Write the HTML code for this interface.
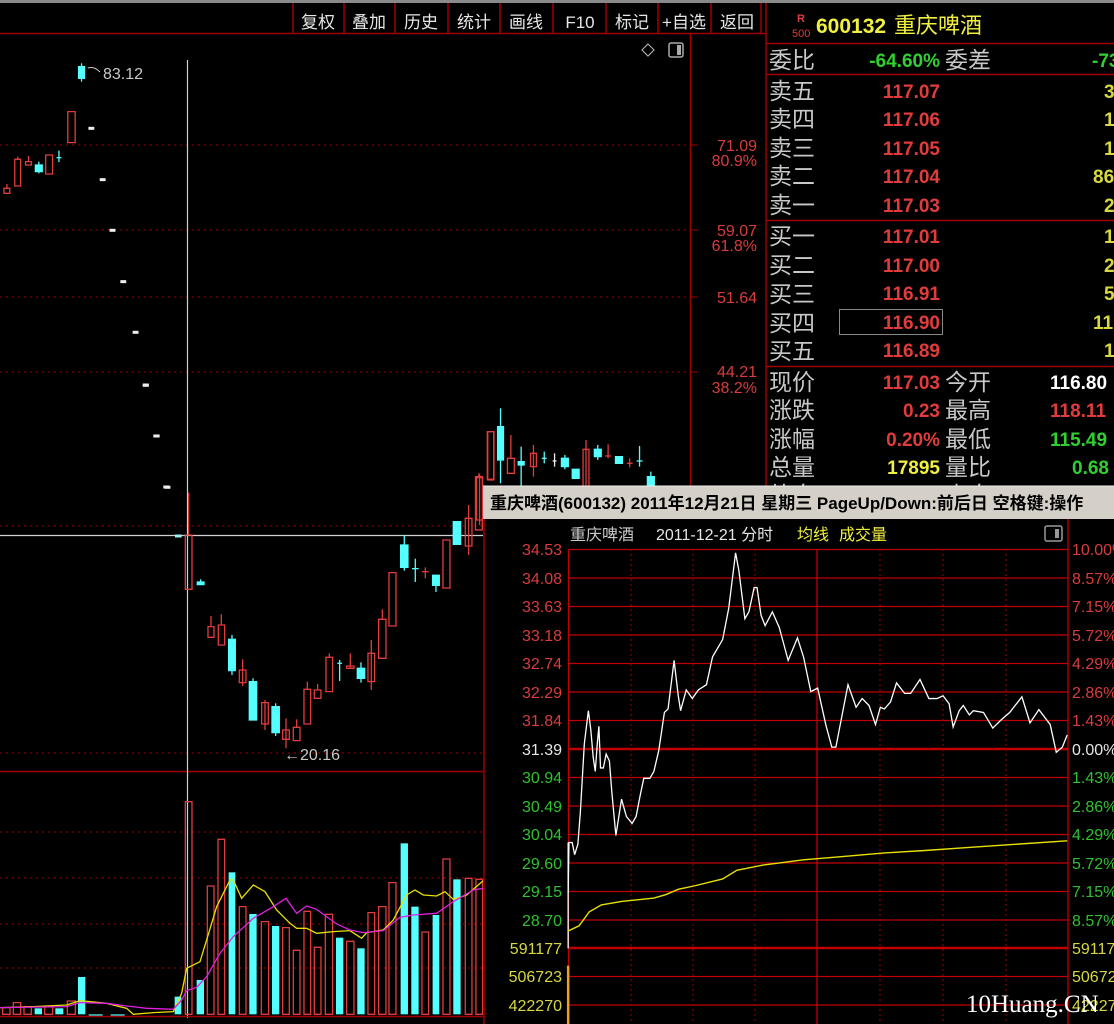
<!DOCTYPE html>
<html><head><meta charset="utf-8"><style>
html,body{margin:0;padding:0;background:#000;width:1114px;height:1024px;overflow:hidden}
svg{display:block}
text{font-family:"Liberation Sans","Noto Sans CJK SC",sans-serif}
.cn{font-family:"Liberation Sans","Noto Sans CJK SC",sans-serif}
.ns *{vector-effect:non-scaling-stroke}
</style></head><body>
<svg width="1114" height="1024" viewBox="0 0 1114 1024" xmlns="http://www.w3.org/2000/svg">
<rect width="1114" height="1024" fill="#000"/>
<rect x="0" y="0" width="1114" height="3" fill="#8a8a8a"/>
<g stroke="#a00000" stroke-width="1.5">
<line x1="0" y1="33.5" x2="766" y2="33.5"/>
<line x1="293" y1="3" x2="293" y2="33"/><line x1="344" y1="3" x2="344" y2="33"/><line x1="395" y1="3" x2="395" y2="33"/><line x1="448" y1="3" x2="448" y2="33"/><line x1="500" y1="3" x2="500" y2="33"/><line x1="553" y1="3" x2="553" y2="33"/><line x1="606" y1="3" x2="606" y2="33"/><line x1="658" y1="3" x2="658" y2="33"/><line x1="711" y1="3" x2="711" y2="33"/><line x1="761" y1="3" x2="761" y2="33"/>
<line x1="766" y1="3" x2="766" y2="487"/>
<line x1="690.5" y1="33" x2="690.5" y2="1024"/>
<line x1="0" y1="771.5" x2="690" y2="771.5"/>
</g>
<g fill="#e6e6e6" font-size="17" text-anchor="middle" class="cn">
<text x="318" y="28">复权</text><text x="369" y="28">叠加</text><text x="421" y="28">历史</text><text x="474" y="28">统计</text><text x="526" y="28">画线</text><text x="580" y="28">F10</text><text x="632" y="28">标记</text><text x="684" y="28">+自选</text><text x="737" y="28">返回</text>
</g>
<path d="M648 44 L654 50 L648 56 L642 50 Z" fill="none" stroke="#aaa" stroke-width="1.2"/>
<rect x="669" y="43" width="14" height="14" rx="2" fill="none" stroke="#aaa" stroke-width="1.5"/><rect x="677" y="45" width="4" height="10" fill="#aaa"/>
<g stroke="#a00000" stroke-width="1" stroke-dasharray="2,4">
<line x1="0" y1="145" x2="690" y2="145"/><line x1="0" y1="230" x2="690" y2="230"/><line x1="0" y1="297" x2="690" y2="297"/><line x1="0" y1="372" x2="690" y2="372"/><line x1="0" y1="526" x2="690" y2="526"/><line x1="0" y1="753" x2="690" y2="753"/>
<line x1="0" y1="832" x2="690" y2="832"/><line x1="0" y1="878" x2="690" y2="878"/><line x1="0" y1="924" x2="690" y2="924"/><line x1="0" y1="968" x2="690" y2="968"/>
</g>
<g fill="#d83c3c" font-size="16" text-anchor="end">
<text x="757" y="151">71.09</text><text x="757" y="166">80.9%</text>
<text x="757" y="236">59.07</text><text x="757" y="251">61.8%</text>
<text x="757" y="303">51.64</text>
<text x="757" y="377">44.21</text><text x="757" y="393">38.2%</text>
</g>
<g stroke="#a00000"><line x1="690" y1="145" x2="698" y2="145"/><line x1="690" y1="230" x2="698" y2="230"/><line x1="690" y1="297" x2="698" y2="297"/><line x1="690" y1="372" x2="698" y2="372"/></g>
<text x="103" y="79" fill="#c8c8c8" font-size="16">83.12</text>
<text x="284" y="760" fill="#c8c8c8" font-size="16">←20.16</text>
<path d="M88 68 Q94 66 100 72" stroke="#c8c8c8" fill="none"/>
<line x1="187.5" y1="60" x2="187.5" y2="1018" stroke="#d0d0d0" stroke-width="1.2"/>
<line x1="0" y1="535.5" x2="484" y2="535.5" stroke="#d0d0d0" stroke-width="1.2"/>
<g class="ns" transform="translate(0,30) scale(0.4912,0.3333)" stroke-width="1.3">
<g stroke="#e03c3c" fill="none">
<line x1="14" y1="462" x2="14" y2="475"/><rect x="8" y="475" width="12" height="15"/>
<line x1="36" y1="380" x2="36" y2="388"/><rect x="30" y="388" width="12" height="80"/>
<line x1="58" y1="378" x2="58" y2="395"/><rect x="52" y="395" width="12" height="10"/>
<rect x="93" y="375" width="14" height="57"/>
<rect x="138" y="245" width="15" height="93"/>
<line x1="975" y1="1330" x2="975" y2="1340"/><rect x="968" y="1340" width="14" height="160"/>
<rect x="993" y="1205" width="12" height="145"/>
<line x1="1040" y1="1215" x2="1040" y2="1285"/><rect x="1033" y="1285" width="14" height="45"/>
<line x1="1086" y1="1245" x2="1086" y2="1340"/><rect x="1080" y="1270" width="12" height="40"/>
<line x1="1193" y1="1230" x2="1193" y2="1370"/><rect x="1187" y="1258" width="12" height="112"/>
<line x1="1238" y1="1243" x2="1238" y2="1285"/><line x1="1232" y1="1278" x2="1244" y2="1278"/>
<line x1="1282" y1="1285" x2="1282" y2="1312"/><line x1="1276" y1="1300" x2="1288" y2="1300"/>
</g>
<g stroke="#54ffff" fill="#54ffff">
<line x1="79" y1="395" x2="79" y2="430"/><rect x="72" y="405" width="14" height="20"/>
<line x1="120" y1="362" x2="120" y2="396"/><line x1="115" y1="383" x2="125" y2="383"/>
<line x1="166" y1="100" x2="166" y2="155"/><rect x="160" y="110" width="12" height="35"/>
<line x1="1019" y1="1135" x2="1019" y2="1360"/><rect x="1013" y="1190" width="12" height="100"/>
<line x1="1061" y1="1250" x2="1061" y2="1370"/><rect x="1055" y="1295" width="12" height="10"/>
<line x1="1108" y1="1265" x2="1108" y2="1300"/><line x1="1103" y1="1285" x2="1113" y2="1285"/>
<line x1="1150" y1="1275" x2="1150" y2="1318"/><rect x="1143" y="1285" width="14" height="25"/>
<rect x="1165" y="1318" width="14" height="27"/>
<line x1="1217" y1="1245" x2="1217" y2="1290"/><rect x="1210" y="1258" width="14" height="22"/>
<rect x="1253" y="1280" width="14" height="20"/>
<line x1="1302" y1="1248" x2="1302" y2="1310"/><line x1="1296" y1="1293" x2="1308" y2="1293"/>
<line x1="1325" y1="1325" x2="1325" y2="1368"/><rect x="1318" y="1340" width="14" height="28"/>
</g>
<g stroke="#eee"><line x1="1129" y1="1270" x2="1129" y2="1310"/><line x1="1125" y1="1293" x2="1133" y2="1293"/></g>
<g stroke="#eee" stroke-width="3">
<line x1="180" y1="295" x2="192" y2="295"/><line x1="203" y1="449" x2="215" y2="449"/><line x1="223" y1="601" x2="235" y2="601"/><line x1="245" y1="755" x2="257" y2="755"/><line x1="270" y1="907" x2="282" y2="907"/><line x1="291" y1="1066" x2="303" y2="1066"/><line x1="313" y1="1218" x2="325" y2="1218"/><line x1="335" y1="1372" x2="347" y2="1372"/>
</g>
</g>
<g class="ns" transform="translate(0,380) scale(0.3333)" stroke-width="1.3">
<g stroke="#e03c3c" fill="none">
<line x1="566" y1="338" x2="566" y2="465"/><rect x="556" y="465" width="20" height="163"/>
<line x1="633" y1="708" x2="633" y2="740"/><rect x="624" y="740" width="18" height="32"/>
<line x1="664" y1="703" x2="664" y2="735"/><rect x="655" y="735" width="19" height="60"/>
<line x1="728" y1="838" x2="728" y2="918"/><rect x="718" y="870" width="20" height="38"/>
<line x1="795" y1="960" x2="795" y2="1050"/><rect x="785" y="968" width="20" height="64"/>
<line x1="858" y1="1015" x2="858" y2="1105"/><rect x="848" y="1050" width="20" height="28"/>
<line x1="890" y1="1018" x2="890" y2="1042"/><rect x="880" y="1042" width="20" height="40"/>
<line x1="922" y1="905" x2="922" y2="928"/><rect x="912" y="928" width="20" height="104"/>
<line x1="953" y1="912" x2="953" y2="930"/><rect x="943" y="930" width="20" height="25"/>
<line x1="988" y1="820" x2="988" y2="832"/><rect x="978" y="832" width="20" height="103"/>
<line x1="1051" y1="820" x2="1051" y2="865"/><rect x="1040" y="858" width="22" height="7"/>
<line x1="1114" y1="780" x2="1114" y2="930"/><rect x="1104" y="820" width="20" height="85"/>
<line x1="1147" y1="688" x2="1147" y2="718"/><rect x="1136" y="718" width="22" height="117"/>
<rect x="1167" y="578" width="21" height="160"/>
<line x1="1276" y1="562" x2="1276" y2="595"/><line x1="1266" y1="575" x2="1286" y2="575"/>
<rect x="1329" y="480" width="21" height="144"/>
<line x1="1406" y1="375" x2="1406" y2="525"/><rect x="1396" y="415" width="20" height="83"/>
<line x1="1439" y1="283" x2="1439" y2="435"/><rect x="1430" y="293" width="18" height="127"/>
<rect x="1462" y="155" width="20" height="143"/>
</g>
<g stroke="#54ffff" fill="#54ffff">
<line x1="602" y1="598" x2="602" y2="606"/><rect x="592" y="606" width="20" height="8"/>
<line x1="696" y1="765" x2="696" y2="885"/><rect x="686" y="778" width="20" height="94"/>
<line x1="759" y1="895" x2="759" y2="905"/><rect x="748" y="905" width="22" height="115"/>
<line x1="827" y1="970" x2="827" y2="1068"/><rect x="816" y="980" width="22" height="78"/>
<line x1="1019" y1="840" x2="1019" y2="903"/><line x1="1012" y1="850" x2="1026" y2="850"/>
<line x1="1083" y1="847" x2="1083" y2="908"/><rect x="1072" y="865" width="22" height="30"/>
<line x1="1213" y1="466" x2="1213" y2="572"/><rect x="1202" y="495" width="22" height="67"/>
<line x1="1246" y1="536" x2="1246" y2="606"/><line x1="1236" y1="566" x2="1256" y2="566"/>
<line x1="1308" y1="586" x2="1308" y2="636"/><rect x="1298" y="586" width="20" height="30"/>
<rect x="1360" y="425" width="22" height="68"/>
</g>
<g stroke="#eee" stroke-width="3"><line x1="428" y1="15" x2="446" y2="15"/><line x1="460" y1="168" x2="478" y2="168"/><line x1="490" y1="321" x2="508" y2="321"/><line x1="525" y1="468" x2="545" y2="468" stroke="#9ee"/></g>
</g>
<g class="ns" transform="translate(0,780) scale(0.3333)" stroke-width="1.3">
<g stroke="#e03c3c" fill="none">
<rect x="8" y="683" width="22" height="20"/><rect x="40" y="668" width="22" height="35"/><rect x="72" y="680" width="22" height="23"/><rect x="134" y="680" width="24" height="23"/><rect x="202" y="663" width="24" height="40"/>
<rect x="556" y="65" width="20" height="638"/><rect x="622" y="318" width="20" height="385"/><rect x="654" y="178" width="20" height="525"/><rect x="718" y="380" width="20" height="323"/><rect x="784" y="425" width="22" height="278"/>
<rect x="848" y="443" width="20" height="260"/><rect x="880" y="511" width="20" height="192"/><rect x="912" y="394" width="20" height="309"/><rect x="943" y="502" width="20" height="201"/><rect x="976" y="403" width="22" height="300"/>
<rect x="1040" y="484" width="22" height="219"/><rect x="1104" y="398" width="20" height="305"/><rect x="1136" y="380" width="22" height="323"/><rect x="1167" y="308" width="21" height="395"/>
<rect x="1266" y="456" width="20" height="247"/><rect x="1329" y="237" width="21" height="466"/><rect x="1396" y="295" width="20" height="408"/><rect x="1428" y="298" width="20" height="405"/>
</g>
<g fill="#54ffff">
<rect x="104" y="685" width="22" height="18"/><rect x="166" y="685" width="24" height="18"/><rect x="234" y="591" width="22" height="112"/>
<rect x="524" y="650" width="20" height="53"/><rect x="590" y="600" width="22" height="103"/><rect x="686" y="277" width="20" height="426"/><rect x="748" y="402" width="22" height="301"/><rect x="816" y="438" width="22" height="265"/>
<rect x="1008" y="473" width="22" height="230"/><rect x="1072" y="505" width="22" height="198"/><rect x="1202" y="190" width="22" height="513"/><rect x="1234" y="380" width="22" height="323"/><rect x="1298" y="405" width="20" height="298"/><rect x="1360" y="298" width="22" height="405"/>
</g>
<line x1="266" y1="705" x2="380" y2="705" stroke="#54ffff" stroke-dasharray="14,8"/>
<polyline fill="none" stroke="#e8e000" stroke-width="1.3" points="0,683 100,680 200,675 240,662 320,670 380,685 400,703 460,698 520,695 545,640 560,565 600,545 620,480 650,380 690,300 700,300 725,355 760,315 795,335 830,390 870,430 890,445 920,445 950,460 1000,455 1050,452 1085,475 1100,458 1150,450 1180,420 1220,345 1245,330 1270,345 1310,348 1335,335 1360,358 1400,345 1450,302"/>
<polyline fill="none" stroke="#e020e0" stroke-width="1.3" points="0,683 200,680 240,668 320,670 380,678 440,685 520,688 545,660 560,632 590,622 620,590 660,520 700,470 760,415 820,380 858,355 890,400 920,378 950,388 1010,432 1050,450 1090,458 1150,452 1200,412 1240,405 1310,400 1360,365 1420,330 1450,325"/>
</g>
<line x1="0" y1="1016.5" x2="690" y2="1016.5" stroke="#a00000" stroke-width="1.5"/>
<g stroke="#a00000" stroke-width="1.5">
<line x1="766" y1="43.5" x2="1114" y2="43.5"/><line x1="766" y1="74.5" x2="1114" y2="74.5"/><line x1="766" y1="220.5" x2="1114" y2="220.5"/><line x1="766" y1="366.5" x2="1114" y2="366.5"/>
</g>
<text x="797" y="22" fill="#e03c3c" font-size="11" font-weight="bold">R</text>
<text x="792" y="37" fill="#e03c3c" font-size="11">500</text>
<text x="816" y="33" fill="#f0f040" font-size="21" font-weight="bold">600132</text>
<text x="894" y="33" fill="#f0f040" font-size="22" class="cn">重庆啤酒</text>
<g fill="#c8c8c8" font-size="23" class="cn">
<text x="769" y="68">委比</text><text x="945" y="68">委差</text>
<text x="769" y="99">卖五</text><text x="769" y="127">卖四</text><text x="769" y="156">卖三</text><text x="769" y="184">卖二</text><text x="769" y="213">卖一</text>
<text x="769" y="244">买一</text><text x="769" y="273">买二</text><text x="769" y="302">买三</text><text x="769" y="331">买四</text><text x="769" y="359">买五</text>
<text x="769" y="390">现价</text><text x="945" y="390">今开</text>
<text x="769" y="418">涨跌</text><text x="945" y="418">最高</text>
<text x="769" y="447">涨幅</text><text x="945" y="447">最低</text>
<text x="769" y="475">总量</text><text x="945" y="475">量比</text>
<text x="769" y="503">外盘</text><text x="945" y="503">内盘</text>
</g>
<rect x="839.5" y="309.5" width="103" height="25" fill="none" stroke="#888" stroke-width="1"/>
<g font-size="19" font-weight="bold" text-anchor="end">
<text x="940" y="67" fill="#30d030">-64.60%</text>
<g fill="#e03c3c"><text x="940" y="98">117.07</text><text x="940" y="126">117.06</text><text x="940" y="155">117.05</text><text x="940" y="183">117.04</text><text x="940" y="212">117.03</text>
<text x="940" y="243">117.01</text><text x="940" y="272">117.00</text><text x="940" y="300">116.91</text><text x="940" y="329">116.90</text><text x="940" y="357">116.89</text>
<text x="940" y="389">117.03</text><text x="940" y="417">0.23</text><text x="940" y="446">0.20%</text></g>
<text x="940" y="474" fill="#f0f040">17895</text>
</g>
<g font-size="19" font-weight="bold">
<text x="1092" y="67" fill="#30d030">-73</text>
<g fill="#d8d840"><text x="1104" y="98">3</text><text x="1104" y="126">1</text><text x="1104" y="155">1</text><text x="1093" y="183">86</text><text x="1104" y="212">2</text>
<text x="1104" y="243">1</text><text x="1104" y="272">2</text><text x="1104" y="300">5</text><text x="1093" y="329">11</text><text x="1104" y="357">1</text></g>
<text x="1050" y="389" fill="#fff">116.80</text><text x="1050" y="417" fill="#e03c3c">118.11</text><text x="1050" y="446" fill="#30d030">115.49</text><text x="1072" y="474" fill="#30d030">0.68</text>
</g>
<rect x="483" y="486" width="631" height="538" fill="#000"/>
<rect x="483" y="486" width="631" height="33" fill="#d4d0c8"/>
<line x1="483" y1="486" x2="1114" y2="486" stroke="#eee"/>
<text x="490" y="509" fill="#000" font-size="17" font-weight="bold" class="cn">重庆啤酒(600132) 2011年12月21日 星期三 PageUp/Down:前后日 空格键:操作</text>
<line x1="484" y1="519" x2="484" y2="1024" stroke="#a00000" stroke-width="1.5"/>
<text x="570" y="540" fill="#c8c8c8" font-size="16" class="cn">重庆啤酒</text>
<text x="656" y="540" fill="#e6e6e6" font-size="16" class="cn">2011-12-21 分时</text>
<text x="797" y="540" fill="#f0f040" font-size="16" class="cn">均线</text>
<text x="839" y="540" fill="#f0f040" font-size="16" class="cn">成交量</text>
<rect x="1045" y="526" width="17" height="15" rx="2" fill="none" stroke="#999" stroke-width="1.5"/><rect x="1055" y="529" width="4" height="9" fill="#999"/>
<g stroke="#c00000" stroke-width="1.3">
<line x1="568" y1="549.5" x2="1068" y2="549.5"/><line x1="568" y1="578" x2="1068" y2="578"/><line x1="568" y1="606.5" x2="1068" y2="606.5"/><line x1="568" y1="635" x2="1068" y2="635"/><line x1="568" y1="663.5" x2="1068" y2="663.5"/><line x1="568" y1="692" x2="1068" y2="692"/><line x1="568" y1="720.5" x2="1068" y2="720.5"/>
<line x1="568" y1="749" x2="1068" y2="749" stroke-width="2.5"/>
<line x1="568" y1="777.5" x2="1068" y2="777.5"/><line x1="568" y1="806" x2="1068" y2="806"/><line x1="568" y1="834.5" x2="1068" y2="834.5"/><line x1="568" y1="863" x2="1068" y2="863"/><line x1="568" y1="891.5" x2="1068" y2="891.5"/><line x1="568" y1="920" x2="1068" y2="920"/>
<line x1="568" y1="948" x2="1068" y2="948" stroke-width="2.5"/><line x1="568" y1="976.5" x2="1068" y2="976.5"/><line x1="568" y1="1005" x2="1068" y2="1005"/>
<line x1="568.5" y1="549" x2="568.5" y2="1024"/><line x1="817" y1="549" x2="817" y2="1024"/><line x1="1068" y1="519" x2="1068" y2="1024"/>
</g>
<g stroke="#a00000" stroke-dasharray="2,3"><line x1="631" y1="549" x2="631" y2="1024"/><line x1="693" y1="549" x2="693" y2="1024"/><line x1="755" y1="549" x2="755" y2="1024"/><line x1="880" y1="549" x2="880" y2="1024"/><line x1="943" y1="549" x2="943" y2="1024"/><line x1="1006" y1="549" x2="1006" y2="1024"/></g>
<g font-size="16" text-anchor="end">
<g fill="#d83c3c"><text x="562" y="555">34.53</text><text x="562" y="584">34.08</text><text x="562" y="612">33.63</text><text x="562" y="641">33.18</text><text x="562" y="669">32.74</text><text x="562" y="698">32.29</text><text x="562" y="726">31.84</text></g>
<text x="562" y="755" fill="#e6e6e6">31.39</text>
<g fill="#30c030"><text x="562" y="783">30.94</text><text x="562" y="812">30.49</text><text x="562" y="840">30.04</text><text x="562" y="869">29.60</text><text x="562" y="897">29.15</text><text x="562" y="926">28.70</text></g>
<g fill="#d8d840"><text x="562" y="954">591177</text><text x="562" y="982">506723</text><text x="562" y="1011">422270</text></g>
</g>
<g font-size="16">
<g fill="#d83c3c"><text x="1072" y="555">10.00%</text><text x="1072" y="584">8.57%</text><text x="1072" y="612">7.15%</text><text x="1072" y="641">5.72%</text><text x="1072" y="669">4.29%</text><text x="1072" y="698">2.86%</text><text x="1072" y="726">1.43%</text></g>
<text x="1072" y="755" fill="#e6e6e6">0.00%</text>
<g fill="#30c030"><text x="1072" y="783">1.43%</text><text x="1072" y="812">2.86%</text><text x="1072" y="840">4.29%</text><text x="1072" y="869">5.72%</text><text x="1072" y="897">7.15%</text><text x="1072" y="926">8.57%</text></g>
<g fill="#d8d840"><text x="1072" y="954">591177</text><text x="1072" y="982">506723</text><text x="1072" y="1011">422270</text></g>
</g>
<g class="ns" transform="translate(480,480) scale(0.4044,0.3469)">
<line x1="218" y1="1400" x2="218" y2="1568" stroke="#f0a020" stroke-width="2.5"/>
<line x1="218" y1="1045" x2="218" y2="1350" stroke="#fff" stroke-width="1.3"/>
<polyline fill="none" stroke="#e8e000" stroke-width="1.4" points="218,1300 245,1285 270,1245 300,1225 350,1215 430,1205 460,1195 490,1180 530,1170 600,1150 635,1125 700,1110 800,1095 900,1085 1000,1075 1100,1068 1200,1060 1300,1052 1452,1040"/>
<polyline fill="none" stroke="#fff" stroke-width="1.3" points="218,1190 220,1045 228,1045 234,1080 242,1050 248,960 252,880 258,760 268,665 274,720 280,800 285,840 290,760 294,710 298,830 305,830 312,790 320,810 326,900 336,1025 350,920 362,970 376,990 386,970 396,910 405,860 420,860 430,840 442,780 456,670 465,660 480,520 490,620 496,665 510,605 525,630 540,605 560,590 575,510 600,460 615,370 632,210 640,260 655,400 665,380 678,310 685,310 695,390 705,420 723,380 740,425 762,520 785,455 800,510 818,610 835,600 855,705 870,770 880,770 895,680 910,590 930,655 945,630 962,650 978,705 990,655 1000,660 1015,640 1030,585 1050,615 1065,615 1088,575 1110,630 1130,630 1145,622 1160,645 1170,712 1185,665 1195,650 1210,677 1220,665 1245,670 1268,715 1290,690 1310,670 1340,625 1360,700 1382,662 1410,705 1425,785 1440,770 1452,735"/>
</g>
<text x="966" y="1012" fill="#fff" font-size="25" style="font-family:'Liberation Serif',serif">10Huang.CN</text>
</svg>
</body></html>
